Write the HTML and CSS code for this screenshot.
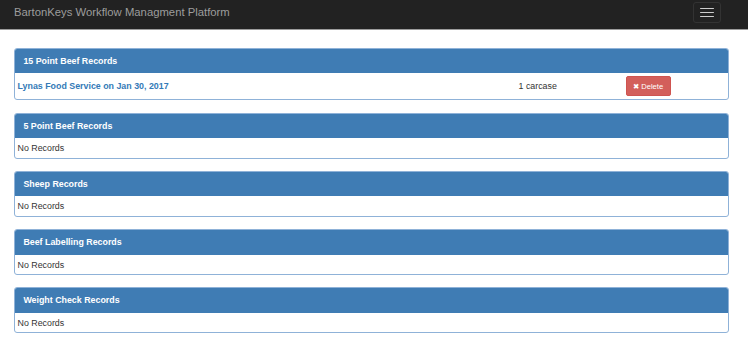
FILE: index.html
```html
<!DOCTYPE html>
<html>
<head>
<meta charset="utf-8">
<link rel="stylesheet" href="styles.css">
</head>
<body>
<nav class="navbar">
  <span class="brand">BartonKeys Workflow Managment Platform</span>
  <button class="toggle"><span class="bar"></span><span class="bar"></span><span class="bar"></span></button>
</nav>
<main class="container">
  <section class="panel">
    <div class="panel-heading">15 Point Beef Records</div>
    <div class="record-row">
      <a class="record-link" href="#">Lynas Food Service on Jan 30, 2017</a>
      <span class="record-count">1 carcase</span>
      <span class="record-action"><button class="btn-delete"><span class="x">&#10006;</span> Delete</button></span>
    </div>
  </section>
  <section class="panel">
    <div class="panel-heading">5 Point Beef Records</div>
    <div class="panel-body">No Records</div>
  </section>
  <section class="panel">
    <div class="panel-heading">Sheep Records</div>
    <div class="panel-body">No Records</div>
  </section>
  <section class="panel">
    <div class="panel-heading">Beef Labelling Records</div>
    <div class="panel-body">No Records</div>
  </section>
  <section class="panel">
    <div class="panel-heading">Weight Check Records</div>
    <div class="panel-body">No Records</div>
  </section>
</main>
</body>
</html>
```

FILE: styles.css
```css
* { box-sizing: border-box; }
html, body { margin: 0; padding: 0; background: #fff; }
body {
  font-family: "Liberation Sans", Arial, sans-serif;
  font-size: 8.85px;
  color: #333;
}
.navbar {
  height: 30px;
  background: #222;
  border-bottom: 1px solid #9c9c9c;
  display: flex;
  align-items: center;
  justify-content: space-between;
  padding: 0 27px 0 14px;
}
.brand {
  color: #9d9d9d;
  font-size: 11.3px;
  line-height: 1;
  margin-top: -3px;
}
.toggle {
  width: 28px;
  height: 21px;
  margin-top: -4px;
  background: transparent;
  border: 1px solid #333;
  border-radius: 3px;
  padding: 0;
  display: flex;
  flex-direction: column;
  align-items: center;
  justify-content: center;
  gap: 2.4px;
}
.bar {
  display: block;
  width: 14px;
  height: 1.4px;
  background: #ccc;
  border-radius: 1px;
}
.container {
  padding: 17.5px 19px 0 14px;
}
.panel {
  border: 1px solid #8fb2d8;
  border-radius: 3px;
  margin-bottom: 12.3px;
  overflow: hidden;
  background: #fff;
}
.panel-heading {
  background: #3f7cb4;
  color: #fff;
  font-weight: bold;
  height: 25.5px;
  line-height: 25px;
  padding: 0 9.4px;
  margin: -1px -1px 0 -1px;
  border-top: 1px solid #5d90c0;
}
.panel-body {
  height: 19.5px;
  line-height: 20px;
  padding: 0 2.5px;
  color: #333;
}
.record-row {
  height: 26.3px;
  display: grid;
  grid-template-columns: 501px 107px 1fr;
  align-items: center;
  padding: 0 2.5px;
}
.record-link {
  color: #337ab7;
  font-weight: bold;
  text-decoration: none;
}
.record-count { color: #333; }
.btn-delete {
  width: 45px;
  height: 19.5px;
  background: #d35f5b;
  border: 1px solid #cf5450;
  border-radius: 2px;
  color: #fff;
  font-family: "Liberation Sans", Arial, sans-serif;
  font-size: 7.6px;
  padding: 0;
  display: flex;
  align-items: center;
  justify-content: center;
  gap: 2px;
}
.x { font-size: 7.5px; font-family: "DejaVu Sans", sans-serif; }
```
